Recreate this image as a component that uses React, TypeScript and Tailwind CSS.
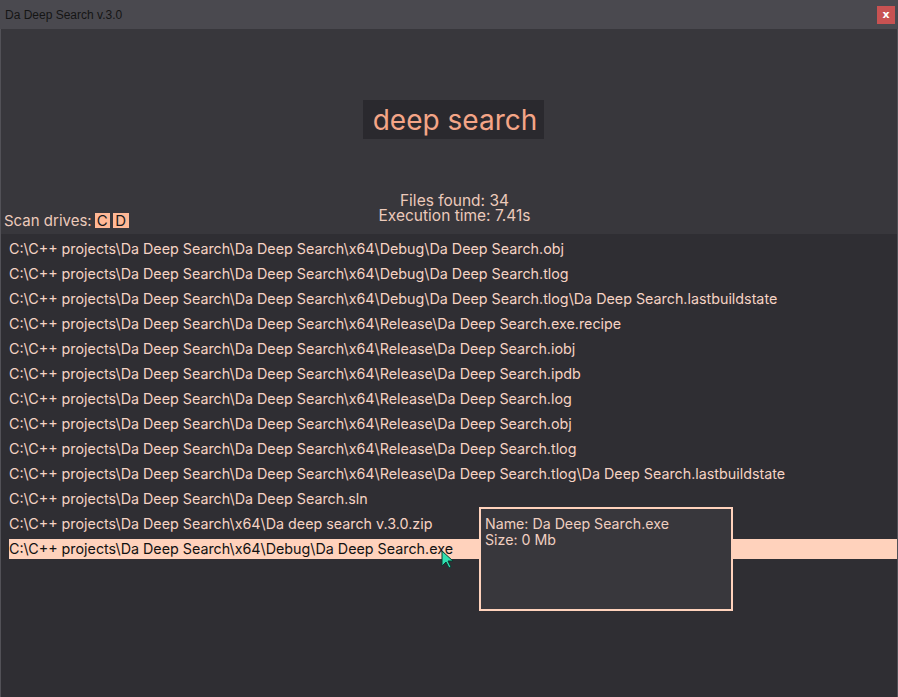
import React from 'react'

const files = [
  'C:\\C++ projects\\Da Deep Search\\Da Deep Search\\x64\\Debug\\Da Deep Search.obj',
  'C:\\C++ projects\\Da Deep Search\\Da Deep Search\\x64\\Debug\\Da Deep Search.tlog',
  'C:\\C++ projects\\Da Deep Search\\Da Deep Search\\x64\\Debug\\Da Deep Search.tlog\\Da Deep Search.lastbuildstate',
  'C:\\C++ projects\\Da Deep Search\\Da Deep Search\\x64\\Release\\Da Deep Search.exe.recipe',
  'C:\\C++ projects\\Da Deep Search\\Da Deep Search\\x64\\Release\\Da Deep Search.iobj',
  'C:\\C++ projects\\Da Deep Search\\Da Deep Search\\x64\\Release\\Da Deep Search.ipdb',
  'C:\\C++ projects\\Da Deep Search\\Da Deep Search\\x64\\Release\\Da Deep Search.log',
  'C:\\C++ projects\\Da Deep Search\\Da Deep Search\\x64\\Release\\Da Deep Search.obj',
  'C:\\C++ projects\\Da Deep Search\\Da Deep Search\\x64\\Release\\Da Deep Search.tlog',
  'C:\\C++ projects\\Da Deep Search\\Da Deep Search\\x64\\Release\\Da Deep Search.tlog\\Da Deep Search.lastbuildstate',
  'C:\\C++ projects\\Da Deep Search\\Da Deep Search.sln',
  'C:\\C++ projects\\Da Deep Search\\x64\\Da deep search v.3.0.zip',
  'C:\\C++ projects\\Da Deep Search\\x64\\Debug\\Da Deep Search.exe',
]

const App = () => {
  return (
    <div className="w-[898px] h-[697px] flex flex-col bg-[#38373c] overflow-hidden font-['Inter',sans-serif]">
      {/* Title bar */}
      <div className="h-[29px] shrink-0 bg-[#4a494f] flex items-center justify-between pl-[5px] pr-[3px]">
        <span className="text-[12px] text-[#151515] font-['Liberation_Sans',sans-serif]">Da Deep Search v.3.0</span>
        <div className="w-[18px] h-[18px] bg-[#c85252] flex items-center justify-center text-white text-[11px] font-bold leading-none font-['DejaVu_Sans',sans-serif]">
          x
        </div>
      </div>

      {/* Window body */}
      <div className="flex-1 flex flex-col border-x border-[#525157]">
        <div className="h-[205px] shrink-0 flex flex-col">
          <div className="flex justify-center pt-[71px]">
            <div className="ml-[9px] h-[39px] bg-[#2a292e] pl-[10px] pr-[7px] flex items-center text-[28px] text-[#f4a587] leading-none">
              deep search
            </div>
          </div>
          <div className="mt-[54px] relative">
            <div className="flex flex-col items-center pl-[11px] text-[15.5px] leading-[15px] text-[#eccabb]">
              <span>Files found: 34</span>
              <span>Execution time: 7.41s</span>
            </div>
            <div className="absolute left-[3px] bottom-[-9px] flex items-center gap-[3px] text-[15px] text-[#eccabb]">
              <span>Scan drives:</span>
              <span className="w-[15px] h-[15px] flex items-center justify-center bg-[#ffb896] text-[#1a1a1a] leading-none">C</span>
              <span className="w-[16px] h-[15px] flex items-center justify-center bg-[#ffb896] text-[#1a1a1a] leading-none">D</span>
            </div>
          </div>
        </div>

        {/* Results list */}
        <div className="flex-1 bg-[#2f2e33] pt-[5px] pl-[8px] flex flex-col gap-[5px] relative">
          {files.map((f, i) => {
            const selected = i === files.length - 1
            return (
              <div
                key={i}
                className={
                  selected
                    ? 'h-[20px] flex items-center bg-[#ffd2bc] text-[#111] text-[14.3px] whitespace-nowrap'
                    : 'h-[20px] flex items-center text-[#f6d3c4] text-[14.3px] whitespace-nowrap'
                }
              >
                {f}
              </div>
            )
          })}

          {/* Tooltip */}
          <div className="absolute left-[478px] top-[273px] w-[254px] h-[104px] border-2 border-[#ffd2bc] bg-[#38373c] px-[4px] pt-[7px] text-[14.2px] leading-[16px] text-[#f0cfc1]">
            <div>Name: Da Deep Search.exe</div>
            <div>Size: 0 Mb</div>
          </div>

          {/* Mouse cursor */}
          <svg className="absolute left-[440px] top-[316px]" width="14" height="20" viewBox="0 0 14 20">
            <path d="M1 1 L1 16 L5 12 L8 18 L10 17 L7 11 L12 11 Z" fill="#2fe0b0" stroke="#0a3a30" strokeWidth="1" />
          </svg>
        </div>
      </div>
    </div>
  )
}

export default App
